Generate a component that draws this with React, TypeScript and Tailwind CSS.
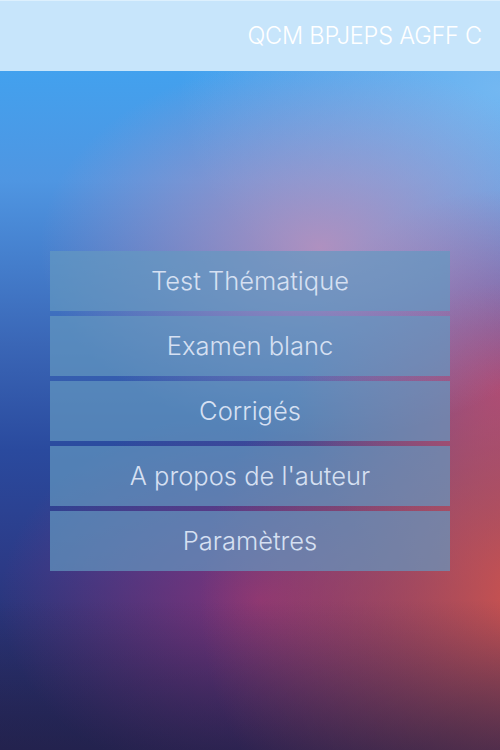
const MENU = [
  "Test Thématique",
  "Examen blanc",
  "Corrigés",
  "A propos de l'auteur",
  "Paramètres",
];

export default function App() {
  return (
    <div
      className="w-[500px] h-[750px] flex flex-col overflow-hidden bg-[image:linear-gradient(180deg,transparent_80%,rgba(36,30,70,0.5)_100%),radial-gradient(ellipse_280px_190px_at_64%_33%,rgba(192,146,188,0.85),transparent),radial-gradient(ellipse_340px_320px_at_108%_80%,rgba(214,84,76,1),transparent),radial-gradient(ellipse_200px_200px_at_100%_52%,rgba(170,70,130,0.85),transparent),radial-gradient(ellipse_260px_190px_at_52%_80%,rgba(150,50,120,0.8),transparent),radial-gradient(ellipse_320px_240px_at_100%_12%,rgba(120,186,242,0.9),transparent),linear-gradient(180deg,#3aa8f6_0%,#4f96e2_24%,#3a66b6_46%,#2a4a9e_60%,#2c3a86_76%,#222656_100%)]"
      style={{ fontFamily: "Inter, 'Open Sans', sans-serif" }}
    >
      <header className="h-[71px] shrink-0 bg-[#c7e5fb] border-t border-[#ddf0fd] flex items-center justify-end pr-[18px]">
        <h1 className="text-[23.5px] font-light text-white tracking-[-0.2px]">
          QCM BPJEPS AGFF C
        </h1>
      </header>

      <nav className="flex flex-col gap-[5px] px-[50px] pt-[180px]">
        {MENU.map((item) => (
          <button
            key={item}
            className="h-[60px] w-full bg-[rgba(100,152,192,0.7)] text-[25.5px] font-light text-[#d6e0f2] flex items-center justify-center"
          >
            {item}
          </button>
        ))}
      </nav>
    </div>
  );
}
